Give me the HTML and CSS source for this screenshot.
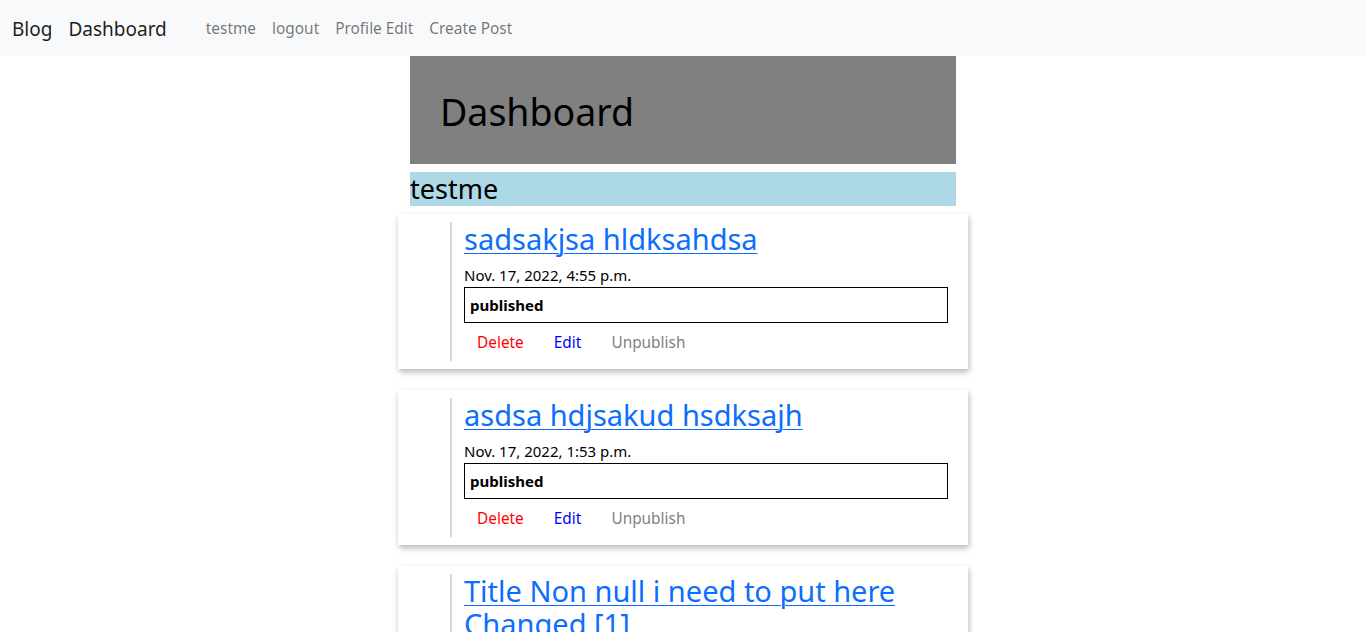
FILE: index.html
```html
<!DOCTYPE html>
<html lang="en">
<head>
<meta charset="utf-8">
<title>Dashboard</title>
<link rel="stylesheet" href="styles.css">
</head>
<body>
<nav class="navbar">
  <a class="brand" href="#">Blog</a>
  <a class="brand" href="#">Dashboard</a>
  <ul class="nav-links">
    <li><a href="#">testme</a></li>
    <li><a href="#">logout</a></li>
    <li><a href="#">Profile Edit</a></li>
    <li><a href="#">Create Post</a></li>
  </ul>
</nav>
<main class="container">
  <div class="hero"><h1>Dashboard</h1></div>
  <h3 class="user">testme</h3>
  <div class="posts">
    <article class="card">
      <div class="card-inner">
        <h2 class="title"><a href="#">sadsakjsa hldksahdsa</a></h2>
        <p class="date">Nov. 17, 2022, 4:55 p.m.</p>
        <div class="status">published</div>
        <div class="actions">
          <a class="btn del" href="#">Delete</a>
          <a class="btn edit" href="#">Edit</a>
          <a class="btn unpub" href="#">Unpublish</a>
        </div>
      </div>
    </article>
    <article class="card">
      <div class="card-inner">
        <h2 class="title"><a href="#">asdsa hdjsakud hsdksajh</a></h2>
        <p class="date">Nov. 17, 2022, 1:53 p.m.</p>
        <div class="status">published</div>
        <div class="actions">
          <a class="btn del" href="#">Delete</a>
          <a class="btn edit" href="#">Edit</a>
          <a class="btn unpub" href="#">Unpublish</a>
        </div>
      </div>
    </article>
    <article class="card">
      <div class="card-inner">
        <h2 class="title"><a href="#">Title Non null i need to put here Changed [1]</a></h2>
        <p class="date">Nov. 17, 2022, 1:40 p.m.</p>
        <div class="status">published</div>
        <div class="actions">
          <a class="btn del" href="#">Delete</a>
          <a class="btn edit" href="#">Edit</a>
          <a class="btn unpub" href="#">Unpublish</a>
        </div>
      </div>
    </article>
  </div>
</main>
</body>
</html>
```
FILE: styles.css
```css
* { box-sizing: border-box; }
html, body { margin: 0; padding: 0; }
body {
  font-family: "Noto Sans", "Open Sans", sans-serif;
  font-size: 16px;
  line-height: 1.5;
  color: #212529;
  background: #fff;
}
a { text-decoration: none; }

.navbar {
  height: 56px;
  background: #f8f9fa;
  display: flex;
  align-items: center;
  padding: 2px 12px 0;
}
.brand {
  font-size: 19px;
  color: rgba(0,0,0,.9);
  margin-right: 16px;
  line-height: 30px;
}
.nav-links {
  list-style: none;
  display: flex;
  margin: 0 0 0 15px;
  padding: 0;
}
.nav-links a {
  display: block;
  padding: 8px;
  color: rgba(0,0,0,.55);
  font-size: 15.4px;
}

.container {
  width: 546px;
  margin: 0 auto;
}
.hero {
  background: #808080;
  padding: 32px 30px 28px;
}
.hero h1 {
  margin: 0;
  font-size: 37.5px;
  font-weight: 400;
  line-height: 48px;
  color: #000;
}
.user {
  margin: 8px 0 8px;
  background: #add8e6;
  font-size: 27px;
  font-weight: 400;
  line-height: 34px;
  color: #000;
}
.posts {
  margin: 0 -12px;
  display: flex;
  flex-direction: column;
  gap: 21px;
}
.card {
  background: #fff;
  padding: 8px 20px 8px 52px;
  box-shadow: 1px 3px 6px rgba(0,0,0,.28);
}
.card-inner {
  border-left: 2px solid #d8d8d8;
  padding-left: 12px;
}
.title {
  margin: 0 0 8px;
  font-size: 29px;
  font-weight: 400;
  line-height: 33px;
}
.title a {
  color: #0d6efd;
  text-decoration: underline;
  text-decoration-thickness: 1px;
  text-underline-offset: 3px;
}
.date {
  margin: 0;
  color: #000;
  font-size: 15px;
  line-height: 24px;
}
.status {
  border: 1px solid #000;
  padding: 5px 5px;
  font-weight: 700;
  font-size: 15px;
  line-height: 24px;
  color: #000;
}
.actions {
  display: flex;
  gap: 4px;
}
.btn {
  display: inline-block;
  padding: 7px 12px 5px;
  border: 1px solid transparent;
  font-size: 15.4px;
  line-height: 24px;
}
.del { color: #ff0000; }
.edit { color: #0000ff; }
.unpub { color: #808080; }
```
